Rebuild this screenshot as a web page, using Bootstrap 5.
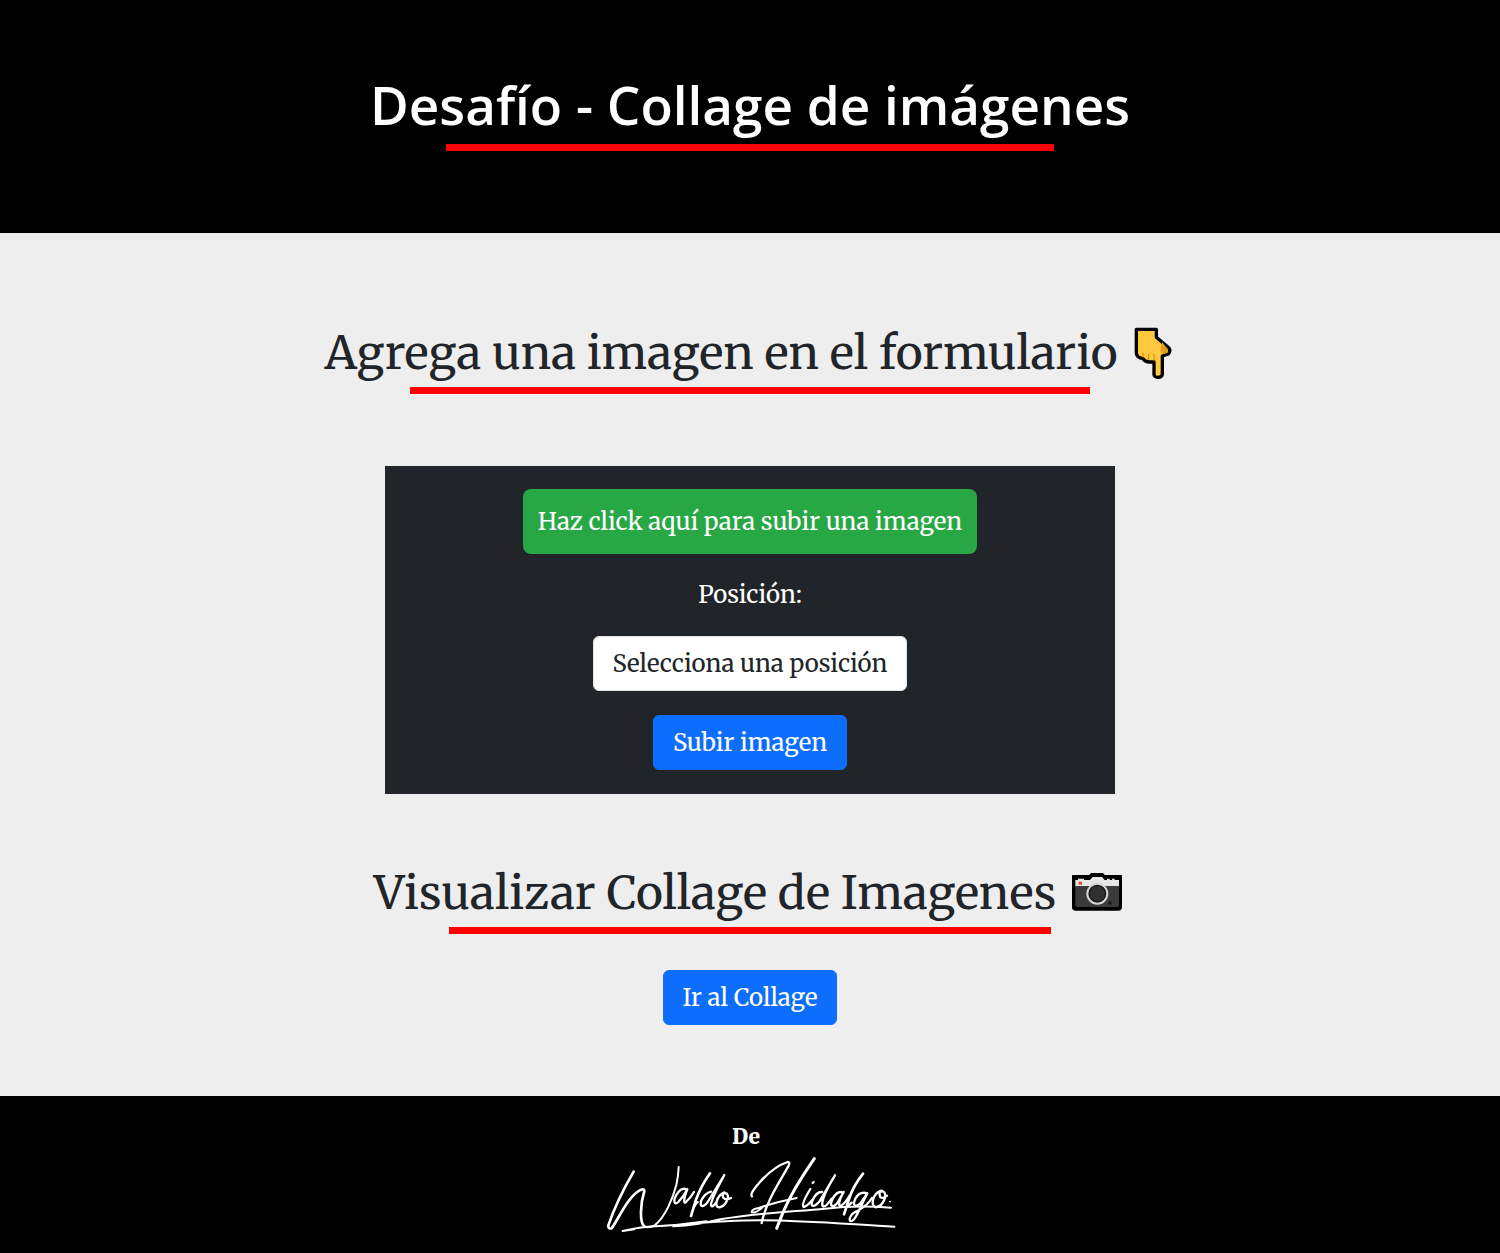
<!DOCTYPE html>
<html lang="es">
<head>
<meta charset="utf-8">
<meta name="viewport" content="width=device-width, initial-scale=1">
<title>Desafío - Collage de imágenes</title>
<link href="https://cdn.jsdelivr.net/npm/bootstrap@5.3.0/dist/css/bootstrap.min.css" rel="stylesheet">
<style>
  body { font-family: "Merriweather", "DejaVu Serif Condensed", "DejaVu Serif", serif; font-size: 24px; background: #eee; }
  .site-band { background: #000; color: #fff; }
  .site-head { padding: 72px 16px 82px; }
  .site-head h1 { font-family: "Segoe UI", "Open Sans", sans-serif; font-weight: 600; font-size: 53px; line-height: 66px; }
  .underlined { display: inline-flex; flex-direction: column; align-items: center; margin: 0; }
  .underlined::after { content: ""; width: 80%; height: 7px; background: #f00; }
  h1.underlined::after { margin-top: 6px; }
  h2.underlined { font-size: 46px; font-weight: 400; line-height: 60px; }
  h2.underlined::after { margin-top: 4px; }
  .emoji { width: 54px; height: 54px; flex: none; }
  .emoji-hand { width: 42px; }
  .site-main { padding: 90px 16px 71px; }
  .upload-form { width: 100%; max-width: 730px; margin: 72px 0 69px; padding: 23px 24px 24px; gap: 24px; background: #212529; color: #fff; }
  .upload-pick { background: #28a745; border-radius: 8px; padding: 14px 15px; line-height: 37px; cursor: pointer; }
  .pos-label { line-height: 34px; }
  .upload-form .pos-select { width: auto; padding: 8px 18px; font-size: 24px; line-height: 37px; text-align: center; background-image: none; border-radius: 6px; color: #212529; }
  .big-btn { font-size: 24px; line-height: 37px; padding: 8px 19px; border-radius: 6px; }
  .go-collage { margin-top: 36px; }
  .site-foot { padding: 24px 16px 18px; }
  .foot-by { font-size: 21px; line-height: 34px; font-weight: 900; margin-right: 8px; }
  .signature { width: 320px; height: 80px; margin-top: 1px; }
</style>
</head>
<body>
<header class="site-band site-head text-center">
  <h1 class="underlined">Desafío - Collage de imágenes</h1>
</header>

<main class="site-main d-flex flex-column align-items-center">
  <h2 class="underlined">
    <span class="d-flex align-items-center gap-3">Agrega una imagen en el formulario
      <svg class="emoji emoji-hand" viewBox="32 0 126 162" aria-hidden="true">
        <path d="M34 10H94V34L132 66Q138 74 130 84L112 90V146Q110 154 99 154Q88 154 87 146V108H72Q58 106 54 98Q36 96 34 82Z" fill="#ffc83d" stroke="#000" stroke-width="10" stroke-linejoin="round" transform="translate(5 0)"/>
        <path d="M116 48L133 69Q137 75 132 80L117 85Q109 76 113 66Z" fill="#e39d1b"/>
        <path d="M59 80V95M76 84V101M92 84V104" stroke="#c78712" stroke-width="3" fill="none"/>
      </svg>
    </span>
  </h2>

  <form class="upload-form d-flex flex-column align-items-center">
    <label class="upload-pick" for="imagen">Haz click aquí para subir una imagen</label>
    <input class="visually-hidden" type="file" id="imagen" accept="image/*">
    <label class="pos-label" for="posicion">Posición:</label>
    <select class="form-select pos-select" id="posicion">
      <option>Selecciona una posición</option>
    </select>
    <button class="btn btn-primary big-btn" type="button">Subir imagen</button>
  </form>

  <h2 class="underlined">
    <span class="d-flex align-items-center gap-3">Visualizar Collage de Imagenes
      <svg class="emoji" viewBox="8 0 162 162" aria-hidden="true">
        <path d="M10 29H60L66 23H100L106 29H156V124Q155 132 147 132H19Q11 132 10 124Z" fill="#000" stroke="#000" stroke-width="4" stroke-linejoin="round"/>
        <path d="M18 42H26V38H44V42H62L70 33H98L106 42H113V38H121V42H128V38H136V42H149V61H18Z" fill="#e6e6e6"/>
        <path d="M18 61H149V118Q149 123 144 123H23Q18 123 18 118Z" fill="#3b3b3b"/>
        <rect x="28" y="47" width="10" height="9" fill="#e7402d"/>
        <circle cx="84" cy="83" r="30" fill="#1c1c1c" stroke="#d6d6d6" stroke-width="6"/>
        <circle cx="84" cy="83" r="22" fill="#303030"/>
        <circle cx="122" cy="111" r="5" fill="#171717"/>
      </svg>
    </span>
  </h2>
  <a class="btn btn-primary big-btn go-collage" href="#collage">Ir al Collage</a>
</main>

<footer class="site-band site-foot d-flex flex-column align-items-center">
  <span class="foot-by">De</span>
  <svg class="signature" viewBox="0 132 960 240" role="img" aria-label="Waldo Hidalgo" fill="none" stroke="#fff" stroke-width="7" stroke-linecap="round" stroke-linejoin="round">
    <path stroke-width="8" d="M131 182C105 226 73 291 55 343Q53 355 65 352C85 325 112 259 149 238Q163 231 163 240C151 278 148 335 163 346"/>
    <path stroke-width="6" d="M163 346Q174 352 194 343C226 319 249 260 259 222Q265 196 266 168"/>
    <path d="M289 235Q275 228 260 250C247 272 254 283 265 273Q283 254 292 235C280 265 280 280 288 273Q301 261 312 243"/>
    <path stroke-width="8" d="M360 187Q333 225 318 266L303 315"/>
    <path d="M312 288Q316 280 323 273M363 242Q345 246 333 270C328 291 342 288 353 273L403 192C383 229 362 272 363 283Q366 292 378 275"/>
    <path d="M403 244C380 253 370 291 389 289C409 285 424 249 405 246Q395 249 400 260Q408 269 423 261"/>
    <path d="M486 256C480 251 489 237 508 215Q552 166 593 153Q601 153 596 164C570 211 527 274 515 336"/>
    <path stroke-width="9" d="M673 143C636 196 602 251 580 302L560 352"/>
    <path stroke-width="6" d="M620 261C577 269 539 280 502 292Q484 296 485 304Q497 308 518 289"/>
    <path d="M661 234C645 260 634 281 641 288Q650 287 667 267M668 216L671 213"/>
    <path d="M696 243Q679 242 667 269C659 291 674 289 690 269L735 193C711 231 692 272 698 286Q706 291 725 263"/>
    <path d="M756 244Q742 239 728 263C717 286 728 293 742 276L761 243C746 269 744 286 752 285Q766 277 780 252"/>
    <path stroke-width="8" d="M819 188Q789 226 777 264L762 310"/>
    <path d="M770 288Q778 282 785 275M827 246Q808 242 796 263C786 284 797 291 812 276L832 247C815 278 805 308 792 325Q779 337 779 323Q783 306 806 298Q833 282 846 261"/>
    <path d="M874 239C850 246 838 285 858 289C881 285 896 247 877 240Q864 242 871 259Q879 264 891 254"/>
    <path stroke-width="4" d="M899 271L901 272"/>
    <path stroke-width="6" d="M98 360Q150 348 195 346C310 338 400 327 520 328C650 329 780 340 913 347M250 346Q320 343 391 325C505 305 613 302 705 293Q800 281 903 290M98 360L132 355M250 343L350 331"/>
  </svg>
</footer>
<script src="https://cdn.jsdelivr.net/npm/bootstrap@5.3.0/dist/js/bootstrap.bundle.min.js"></script>
</body>
</html>
